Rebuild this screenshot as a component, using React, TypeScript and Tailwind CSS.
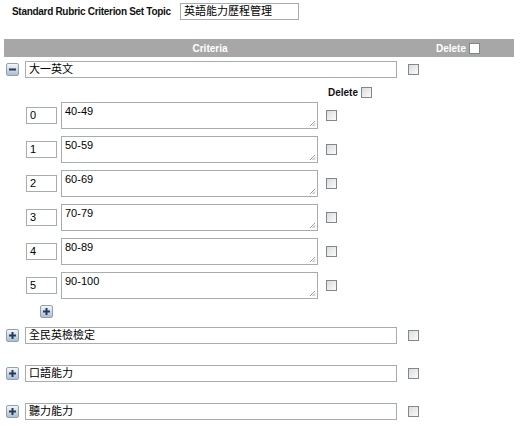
import React from 'react';

const levels = ['40-49', '50-59', '60-69', '70-79', '80-89', '90-100'];
const collapsed = ['全民英檢檢定', '口語能力', '聽力能力'];

function CheckBox({ className = '' }: { className?: string }) {
  return (
    <span
      className={`inline-block w-[11px] h-[11px] border border-[#7e8890] bg-gradient-to-br from-[#dcdcdc] to-[#fbfbfb] ${className}`}
    />
  );
}

function Toggle({ open, className = '' }: { open?: boolean; className?: string }) {
  return (
    <span
      className={`inline-flex items-center justify-center w-[13px] h-[13px] rounded-[2px] border border-[#8ea2b6] bg-gradient-to-b from-[#f4f7fa] to-[#aebdcc] ${className}`}
    >
      <svg width="9" height="9" viewBox="0 0 9 9">
        <rect x="1" y="3.5" width="7" height="2" fill="#1f3d63" />
        {!open && <rect x="3.5" y="1" width="2" height="7" fill="#1f3d63" />}
      </svg>
    </span>
  );
}

function Field({ text, className = '' }: { text: string; className?: string }) {
  return (
    <div
      className={`h-[17px] border border-[#a5acb2] bg-white px-[3px] flex items-center text-[11px] text-black leading-none font-['Liberation_Sans','Noto_Sans_CJK_TC',sans-serif] ${className}`}
    >
      {text}
    </div>
  );
}

export default function App() {
  return (
    <div className="w-[522px] h-[426px] bg-white overflow-hidden font-['Liberation_Sans','Noto_Sans_CJK_TC',sans-serif] text-[11px] text-black">
      {/* topic */}
      <div className="flex items-center pt-[3px] pl-[12px]">
        <span className="w-[159px] font-bold text-[10px] tracking-[-0.3px] text-[#111] whitespace-nowrap">Standard Rubric Criterion Set Topic</span>
        <Field text="英語能力歷程管理" className="ml-[9px] w-[119px]" />
      </div>

      {/* header bar */}
      <div className="mt-[19px] ml-[4px] w-[510px] h-[18px] bg-[#a7a7a7] flex items-center text-white font-bold text-[10px]">
        <div className="w-[412px] text-center">Criteria</div>
        <div className="ml-[20px] flex items-center gap-[3px]">
          Delete
          <span className="inline-block w-[11px] h-[11px] border border-[#7e8890] bg-white" />
        </div>
      </div>

      {/* expanded criterion */}
      <div className="flex items-center mt-[4px] h-[17px]">
        <Toggle open className="ml-[6px]" />
        <Field text="大一英文" className="ml-[6px] w-[372px]" />
        <CheckBox className="ml-[11px]" />
      </div>

      <div className="flex items-center mt-[7px] pl-[328px] font-bold text-[10px] text-[#111] gap-[3px]">
        Delete
        <CheckBox />
      </div>

      <div className="flex flex-col gap-[7px] mt-[2px] pl-[26px]">
        {levels.map((lv, i) => (
          <div key={lv} className="flex items-center">
            <Field text={String(i)} className="w-[31px]" />
            <div className="relative ml-[4px] w-[257px] h-[27px] border border-[#a5acb2] bg-white px-[3px] pt-[2px] text-[11px] leading-[13px]">
              {lv}
              <svg className="absolute right-[1px] bottom-[1px]" width="7" height="7" viewBox="0 0 7 7">
                <path d="M6 1L1 6M6 3.5L3.5 6M6 5.5L5.5 6" stroke="#a0a0a0" strokeWidth="1" />
              </svg>
            </div>
            <CheckBox className="ml-[8px]" />
          </div>
        ))}
      </div>

      <div className="mt-[6px] pl-[40px] flex">
        <Toggle />
      </div>

      {/* collapsed criteria */}
      <div className="flex flex-col gap-[21px] mt-[9px]">
        {collapsed.map((c) => (
          <div key={c} className="flex items-center h-[17px]">
            <Toggle className="ml-[6px]" />
            <Field text={c} className="ml-[6px] w-[372px]" />
            <CheckBox className="ml-[11px]" />
          </div>
        ))}
      </div>
    </div>
  );
}
